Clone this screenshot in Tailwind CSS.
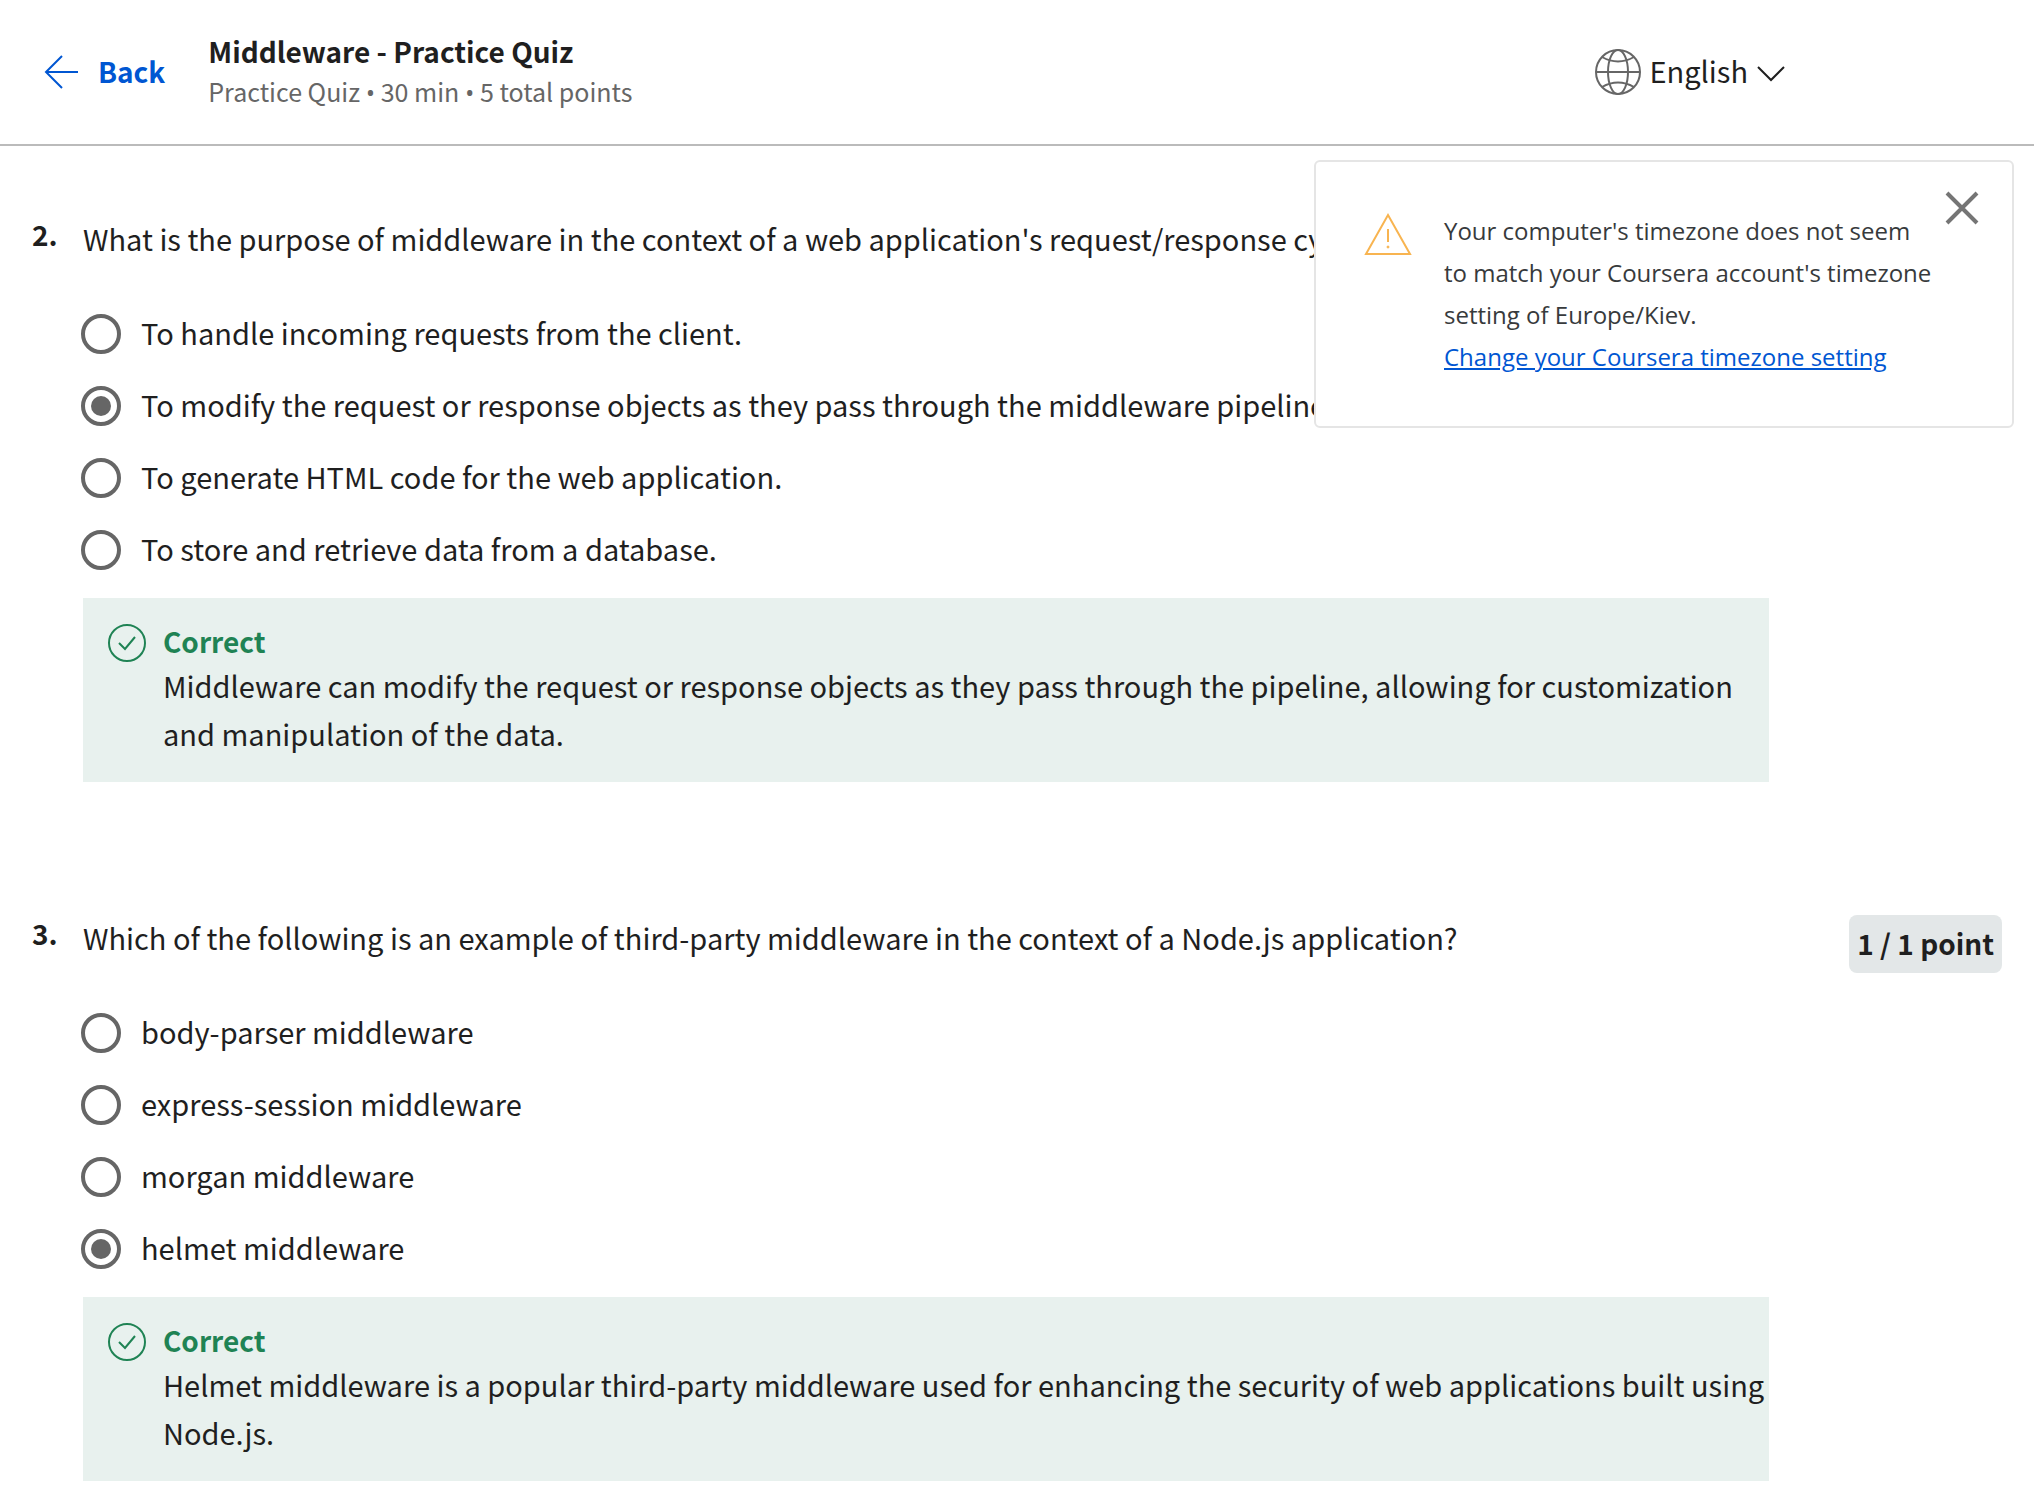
<!DOCTYPE html>
<html lang="en">
<head>
<meta charset="utf-8">
<meta name="viewport" content="width=device-width, initial-scale=1">
<title>Middleware - Practice Quiz</title>
<script src="https://cdn.jsdelivr.net/npm/@tailwindcss/browser@4"></script>
</head>
<body class="min-h-screen bg-white font-['Noto_Sans_CJK_SC',sans-serif] text-[29px] leading-12 text-[#1f1f1f]">

<header class="flex items-center border-b-2 border-[#bbbbbb] py-[31px] pr-[249px] pl-11">
  <a href="#" class="flex items-center gap-[18px] text-[28px] font-bold text-[#0056d2]">
    <svg class="size-9" viewBox="0 0 36 36" fill="none" stroke="currentColor" stroke-width="2" aria-hidden="true"><path d="M34 18H2M18 2L2 18L18 34"/></svg>
    <span class="pb-0.5">Back</span>
  </a>
  <div class="ml-[43px] pb-0.5">
    <h1 class="text-[28px] leading-10 font-bold">Middleware - Practice Quiz</h1>
    <p class="text-[25px] leading-10 text-[#666666]">Practice Quiz <span class="font-['Open_Sans'] leading-none">•</span> 30 min <span class="font-['Open_Sans'] leading-none">•</span> 5 total points</p>
  </div>
  <div class="ml-auto flex items-center">
    <svg class="size-12 text-[#666666]" viewBox="0 0 48 48" fill="none" stroke="currentColor" stroke-width="2" aria-hidden="true"><circle cx="24" cy="24" r="22"/><ellipse cx="24" cy="24" rx="10" ry="22"/><path d="M2 24H46M8 9Q24 18 40 9M8 39Q24 30 40 39"/></svg>
    <select aria-label="Language" class="ml-[3px] appearance-none bg-transparent px-1 pb-1 [field-sizing:content]"><option>English</option></select>
    <svg class="mt-[3px] ml-[5px] h-4 w-7" viewBox="0 0 28 16" fill="none" stroke="currentColor" stroke-width="2" aria-hidden="true"><path d="M1 1L14 14L27 1"/></svg>
  </div>
</header>

<main class="flex flex-col gap-[131px] px-8 pt-[68px] pb-8">
  <section class="grid grid-cols-[51px_1fr_233px] items-start">
    <span class="text-[28px] leading-10 font-bold">2.</span>
    <fieldset>
      <legend class="mb-9">What is the purpose of middleware in the context of a web application's request/response cycle?</legend>
      <label class="flex h-18 items-center gap-5"><input type="radio" name="q2" class="-ml-0.5 size-10 appearance-none rounded-full border-4 border-[#666666] checked:bg-[#666666] checked:bg-clip-content checked:p-1.5"><span class="pb-1">To handle incoming requests from the client.</span></label>
      <label class="flex h-18 items-center gap-5"><input type="radio" name="q2" checked class="-ml-0.5 size-10 appearance-none rounded-full border-4 border-[#666666] checked:bg-[#666666] checked:bg-clip-content checked:p-1.5"><span class="pb-1">To modify the request or response objects as they pass through the middleware pipeline.</span></label>
      <label class="flex h-18 items-center gap-5"><input type="radio" name="q2" class="-ml-0.5 size-10 appearance-none rounded-full border-4 border-[#666666] checked:bg-[#666666] checked:bg-clip-content checked:p-1.5"><span class="pb-1">To generate HTML code for the web application.</span></label>
      <label class="flex h-18 items-center gap-5"><input type="radio" name="q2" class="-ml-0.5 size-10 appearance-none rounded-full border-4 border-[#666666] checked:bg-[#666666] checked:bg-clip-content checked:p-1.5"><span class="pb-1">To store and retrieve data from a database.</span></label>
      <div class="mt-3 flex gap-4 bg-[#e8f1ee] pt-[23px] pr-1 pb-[25px] pl-6">
        <svg class="mt-0.5 size-10 shrink-0 text-[#1f8354]" viewBox="0 0 40 40" fill="none" stroke="currentColor" stroke-width="2" aria-hidden="true"><circle cx="20" cy="20" r="18"/><path d="M12 20L18 26L28 14"/></svg>
        <div>
          <p class="text-[28px] leading-10 font-bold text-[#1f8354]">Correct</p>
          <p>Middleware can modify the request or response objects as they pass through the pipeline, allowing for customization and manipulation of the data.</p>
        </div>
      </div>
    </fieldset>
  </section>

  <section class="grid grid-cols-[51px_1fr_233px] items-start">
    <span class="text-[28px] leading-10 font-bold">3.</span>
    <fieldset>
      <legend class="mb-9">Which of the following is an example of third-party middleware in the context of a Node.js application?</legend>
      <label class="flex h-18 items-center gap-5"><input type="radio" name="q3" class="-ml-0.5 size-10 appearance-none rounded-full border-4 border-[#666666] checked:bg-[#666666] checked:bg-clip-content checked:p-1.5"><span class="pb-1">body-parser middleware</span></label>
      <label class="flex h-18 items-center gap-5"><input type="radio" name="q3" class="-ml-0.5 size-10 appearance-none rounded-full border-4 border-[#666666] checked:bg-[#666666] checked:bg-clip-content checked:p-1.5"><span class="pb-1">express-session middleware</span></label>
      <label class="flex h-18 items-center gap-5"><input type="radio" name="q3" class="-ml-0.5 size-10 appearance-none rounded-full border-4 border-[#666666] checked:bg-[#666666] checked:bg-clip-content checked:p-1.5"><span class="pb-1">morgan middleware</span></label>
      <label class="flex h-18 items-center gap-5"><input type="radio" name="q3" checked class="-ml-0.5 size-10 appearance-none rounded-full border-4 border-[#666666] checked:bg-[#666666] checked:bg-clip-content checked:p-1.5"><span class="pb-1">helmet middleware</span></label>
      <div class="mt-3 flex gap-4 bg-[#e8f1ee] pt-[23px] pr-1 pb-[25px] pl-6">
        <svg class="mt-0.5 size-10 shrink-0 text-[#1f8354]" viewBox="0 0 40 40" fill="none" stroke="currentColor" stroke-width="2" aria-hidden="true"><circle cx="20" cy="20" r="18"/><path d="M12 20L18 26L28 14"/></svg>
        <div>
          <p class="text-[28px] leading-10 font-bold text-[#1f8354]">Correct</p>
          <p>Helmet middleware is a popular third-party middleware used for enhancing the security of web applications built using Node.js.</p>
        </div>
      </div>
    </fieldset>
    <span class="mt-0.5 justify-self-end rounded-lg bg-[#e3e7e8] px-2 pt-1 pb-1.5 text-[28px] font-bold">1 / 1 point</span>
  </section>
</main>

<aside role="alert" class="absolute top-40 right-5 flex w-[700px] items-start rounded-md border-2 border-[#e5e5e5] bg-white py-12 pr-8 pl-12 font-['Open_Sans',sans-serif] text-2xl leading-[42px] text-[#373a3c]">
  <svg class="mt-0.5 h-11 w-12 shrink-0 text-[#f8b450]" viewBox="0 0 48 44" fill="none" stroke="currentColor" stroke-width="2" aria-hidden="true"><path d="M24 3L46 42H2Z"/><path d="M24 17V30"/><circle cx="24" cy="35" r="1" fill="currentColor" stroke-width="1"/></svg>
  <div class="ml-8 flex-1">
    <p>Your computer's timezone does not seem to match your Coursera account's timezone setting of Europe/Kiev.</p>
    <a href="#" class="text-[#0056d2] underline">Change your Coursera timezone setting</a>
  </div>
  <button type="button" aria-label="Close" class="-mt-5 ml-2 text-[#757575]">
    <svg class="size-9" viewBox="0 0 36 36" fill="none" stroke="currentColor" stroke-width="4" aria-hidden="true"><path d="M3 3L33 33M33 3L3 33"/></svg>
  </button>
</aside>

</body>
</html>
